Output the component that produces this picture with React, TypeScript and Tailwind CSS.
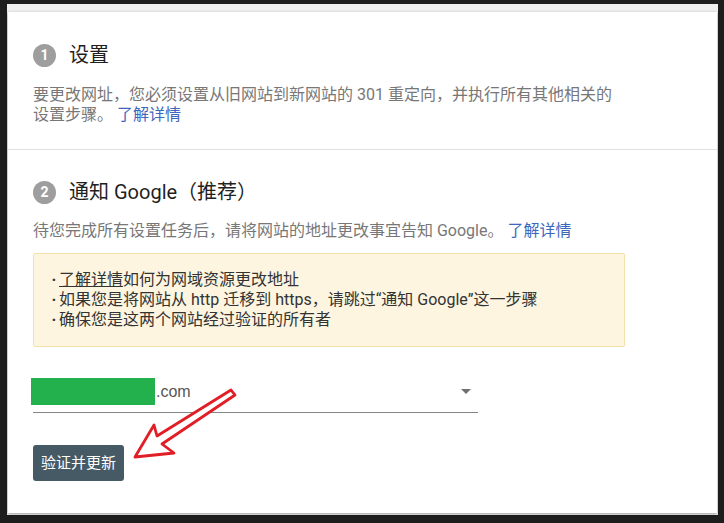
import * as React from "react";

function StepBadge({ n }: { n: number }) {
  return (
    <span className="flex h-[23px] w-[23px] shrink-0 items-center justify-center rounded-full bg-[#9e9e9e] text-[14px] font-bold leading-none text-white">
      {n}
    </span>
  );
}

function StepTitle({ n, children }: { n: number; children: React.ReactNode }) {
  return (
    <div className="flex items-center gap-[13px]">
      <StepBadge n={n} />
      <h2 className="text-[20px] leading-[28px] font-normal text-[#1f1f1f]">{children}</h2>
    </div>
  );
}

export default function App() {
  return (
    <div className="relative h-[523px] w-[724px] overflow-hidden bg-[#1d1d1d] pt-[4px] pl-[7px] pr-[6px] pb-[8px] font-['Roboto','Noto_Sans_CJK_SC',sans-serif]">
      <div className="h-full bg-[#efefef] pt-[8px] px-[1px] pb-[2px]">
        <div className="h-full bg-white shadow-[0_1px_3px_rgba(0,0,0,0.35)]">
          {/* step 1 */}
          <section className="border-b border-[#e0e0e0] px-[25px] pt-[29px] pb-[24px]">
            <StepTitle n={1}>设置</StepTitle>
            <p className="mt-[16px] max-w-[592px] text-[16px] leading-[20px] text-[#777]">
              要更改网址，您必须设置从旧网站到新网站的 301 重定向，并执行所有其他相关的设置步骤。 <a className="text-[#3c67bd]">了解详情</a>
            </p>
          </section>

          {/* step 2 */}
          <section className="px-[25px] pt-[28px]">
            <StepTitle n={2}>通知 Google（推荐）</StepTitle>
            <p className="mt-[15px] max-w-[592px] text-[16px] leading-[20px] text-[#777]">
              待您完成所有设置任务后，请将网站的地址更改事宜告知 Google。 <a className="text-[#3c67bd]">了解详情</a>
            </p>

            <div className="mt-[12px] w-[592px] rounded-[2px] border border-[#f1e1ae] bg-[#fdf5e0] px-[15px] py-[16px] text-[16px] leading-[20px] text-[#333]">
              <div className="flex">
                <span className="w-[10px] text-center font-bold">·</span>
                <span>
                  <span className="underline">了解详情</span>如何为网域资源更改地址
                </span>
              </div>
              <div className="flex">
                <span className="w-[10px] text-center font-bold">·</span>
                <span>如果您是将网站从 http 迁移到 https，请跳过“通知 Google”这一步骤</span>
              </div>
              <div className="flex">
                <span className="w-[10px] text-center font-bold">·</span>
                <span>确保您是这两个网站经过验证的所有者</span>
              </div>
            </div>

            <div className="mt-[24px] flex h-[42px] w-[445px] items-center border-b border-[#858585]">
              <span className="h-[27px] w-[124px] -ml-[2px] bg-[#22b14c]" />
              <span className="ml-[1px] text-[16px] text-[#555] font-['Liberation_Sans',sans-serif]">.com</span>
              <svg className="ml-auto mr-[7px]" width="10" height="5" viewBox="0 0 10 5">
                <path d="M0 0h10L5 5z" fill="#6f6f6f" />
              </svg>
            </div>

            <button className="mt-[32px] h-[36px] rounded-[3px] bg-[#455a64] px-[8px] text-[15px] text-white">
              验证并更新
            </button>
          </section>
        </div>
      </div>

      {/* red annotation arrow */}
      <svg className="pointer-events-none absolute inset-0" width="724" height="523" viewBox="0 0 724 523">
        <polygon
          points="135,457 154,425 157,436 231,390 235,395 162,444 174,453"
          fill="#fff"
          stroke="#e11d25"
          strokeWidth="2.8"
          strokeLinejoin="round"
        />
      </svg>
    </div>
  );
}
